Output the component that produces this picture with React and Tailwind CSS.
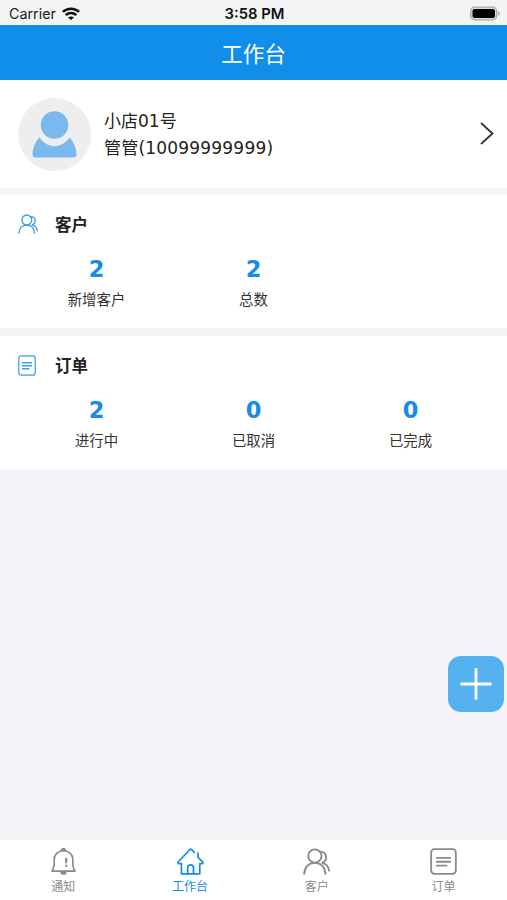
const SANS = "font-['DejaVu_Sans','Noto_Sans_CJK_SC',sans-serif]";

const CustomersIcon = ({ className, strokeWidth = 1.9 }) => (
  <svg
    viewBox="0 0 28 28"
    className={className}
    fill="none"
    stroke="currentColor"
    strokeWidth={strokeWidth}
    strokeLinecap="round"
  >
    <circle cx="12.3" cy="8.3" r="6.9" />
    <path d="M1.200 26.800C2 19.500 6 15.500 12.300 15.500S22.500 19.500 23.300 26.800" />
    <path d="M17.500 3.700C21.500 3.400 24 6.300 24 9.600c0 2.900-1.800 5-4.600 5.600 4.200 1 7 3.800 7.600 8.200" />
  </svg>
);

const OrdersIcon = ({ className, strokeWidth = 1.9 }) => (
  <svg
    viewBox="0 0 28 28"
    className={className}
    fill="none"
    stroke="currentColor"
    strokeWidth={strokeWidth}
    strokeLinecap="round"
    preserveAspectRatio="none"
  >
    <rect x="1.200" y="1.200" width="25.600" height="25.600" rx="3.500" />
    <path d="M7 10.300h14M7 14.300h14M7 18.300h10" />
  </svg>
);

const BellIcon = ({ className }) => (
  <svg
    viewBox="0 0 28 28"
    className={className}
    fill="none"
    stroke="currentColor"
    strokeWidth="1.700"
    strokeLinecap="round"
    strokeLinejoin="round"
  >
    <path d="M2 24c1.600-2 2-3.500 2.300-6.500V12C4.300 6.600 8.500 2.800 14 2.800s9.700 3.800 9.700 9.200v5.500c.3 3 .7 4.500 2.300 6.500z" />
    <path d="M12 2.500a2 1.700 0 0 1 4 0zM11.500 24.500a2.500 2.500 0 0 0 5 0z" fill="currentColor" />
    <path d="M16.800 11v4M16.800 18.300v.3" strokeWidth="2.200" />
  </svg>
);

const HomeIcon = ({ className }) => (
  <svg
    viewBox="0 0 28 28"
    className={className}
    fill="none"
    stroke="currentColor"
    strokeWidth="1.800"
    strokeLinecap="round"
    strokeLinejoin="round"
  >
    <path d="M18 4.500L15.200 1.800c-.7-.7-1.300-.7-2 0L1.200 14.500c-.5.900 0 1.600.8 1.600h2.600v10.700h6.500v-6.500c0-3.700 6-3.700 6 0v6.500h6.500V16.100h2.300c1.200 0 1.300-1 .6-1.800L21.700 9.500V5.300" />
    <path d="M11.100 26.800h6" />
  </svg>
);

const WifiIcon = () => (
  <svg viewBox="0 0 18 13" className="h-[13px] w-[18px]" fill="none" stroke="#111" strokeWidth="2.600">
    <path d="M.9 4.900c4.500-4.300 11.700-4.300 16.200 0" />
    <path d="M3.700 8.100c3-2.800 7.600-2.800 10.600 0" />
    <path d="M6.100 10.500c1.700-1.500 4.100-1.500 5.800 0L9 13z" fill="#111" stroke="none" />
  </svg>
);

const StatusBar = () => (
  <div className="grid h-[25px] shrink-0 grid-cols-3 items-center bg-[#f4f4f4] pt-[2px] pr-[7px] pl-[9px] font-['Inter',sans-serif] text-[14.300px] text-[#222]">
    <div className="flex items-center gap-[6px]">
      <span>Carrier</span>
      <WifiIcon />
    </div>
    <span className="pt-px text-center text-[14.800px] font-semibold whitespace-nowrap text-[#111]">3:58 PM</span>
    <svg viewBox="0 0 31 15" className="h-[15px] w-[31px] justify-self-end">
      <rect x="1.700" y="1.200" width="26" height="12.600" rx="4" fill="#ddd" stroke="#aaa" strokeWidth="1.300" />
      <rect x="3.500" y="3" width="22.500" height="9" rx="2" fill="#000" />
      <path d="M29.200 5c2 1 2 4 0 5z" fill="#aaa" />
    </svg>
  </div>
);

const Profile = () => (
  <section className="flex h-[108px] shrink-0 items-center bg-white pr-[13px] pl-[18px]">
    <svg viewBox="0 0 73 73" className="size-[73px]">
      <circle cx="36.500" cy="36.500" r="36.500" fill="#eeeeee" />
      <path
        d="M21.500 39.500c8 11.500 22 11.500 30 0 3.500 3 7 11 7 16.500 0 2.500-1 3.500-3.500 3.500H18c-2.500 0-3.500-1-3.500-3.500 0-5.500 3.500-13.500 7-16.500z"
        fill="#7ab9ed"
      />
      <circle cx="36.500" cy="27" r="16" fill="#eeeeee" />
      <circle cx="36.500" cy="27" r="13.800" fill="#7ab9ed" />
    </svg>
    <div className="ml-[13px] flex-1 pt-[2px] text-[17px] leading-[27px] text-[#222]">
      <p>小店01号</p>
      <p className="tracking-[0.2px]">管管(10099999999)</p>
    </div>
    <svg viewBox="0 0 14 24" className="h-[24px] w-[14px]" fill="none" stroke="#333" strokeWidth="1.800">
      <path d="M1 1l11.500 10.500L1 22" />
    </svg>
  </section>
);

const StatCard = ({ icon, title, stats }) => (
  <section className="h-[133px] shrink-0 bg-white px-[18px] pt-[18px]">
    <div className="flex h-[25px] items-center">
      <span className="w-[20px] pb-[3px]">{icon}</span>
      <h2 className="ml-[17px] pt-px text-[16.500px] font-bold text-[#222]">{title}</h2>
    </div>
    <div className="grid grid-cols-3 pt-[16px]">
      {stats.map((stat) => (
        <div key={stat.label} className="flex flex-col items-center">
          <span className="text-[22.500px] leading-[31px] font-bold text-[#138cea]">{stat.value}</span>
          <span className="text-[14.400px] leading-[30px] text-[#333]">{stat.label}</span>
        </div>
      ))}
    </div>
  </section>
);

const tabs = [
  { label: "通知", Icon: BellIcon },
  { label: "工作台", Icon: HomeIcon, active: true },
  { label: "客户", Icon: CustomersIcon },
  { label: "订单", Icon: OrdersIcon },
];

const TabBar = () => (
  <nav className="grid h-[60px] shrink-0 grid-cols-4 bg-white pt-[8px]">
    {tabs.map(({ label, Icon, active }) => (
      <button
        key={label}
        className={`flex flex-col items-center ${active ? "text-[#138cea]" : "text-[#8a8a8a]"}`}
      >
        <Icon className="size-[27px]" />
        <span className="pt-[1px] text-[12px] leading-[22px]">{label}</span>
      </button>
    ))}
  </nav>
);

const App = () => (
  <div className={`relative flex h-[900px] w-[507px] flex-col overflow-hidden bg-[#f4f4f9] ${SANS}`}>
    <StatusBar />
    <header className="flex h-[55px] shrink-0 items-center justify-center bg-[#118eea] pt-[5px] text-[21.500px] text-white">
      工作台
    </header>
    <main className="flex flex-1 flex-col">
      <Profile />
      <div className="mt-[7px] mb-[8px]">
        <StatCard
          icon={<CustomersIcon className="size-[20px] text-[#3b9de8]" />}
          title="客户"
          stats={[
            { label: "新增客户", value: 2 },
            { label: "总数", value: 2 },
          ]}
        />
      </div>
      <StatCard
        icon={<OrdersIcon className="h-[21px] w-[18px] text-[#3b9de8]" />}
        title="订单"
        stats={[
          { label: "进行中", value: 2 },
          { label: "已取消", value: 0 },
          { label: "已完成", value: 0 },
        ]}
      />
    </main>
    <button className="absolute right-[3px] bottom-[188px] flex size-[56px] items-center justify-center rounded-[13px] bg-[#55b1f0]">
      <svg viewBox="0 0 32 32" className="size-[32px]" stroke="#fff" strokeWidth="2.800" strokeLinecap="round">
        <path d="M16 1.500v29M1.500 16h29" />
      </svg>
    </button>
    <TabBar />
  </div>
);

export default App;
